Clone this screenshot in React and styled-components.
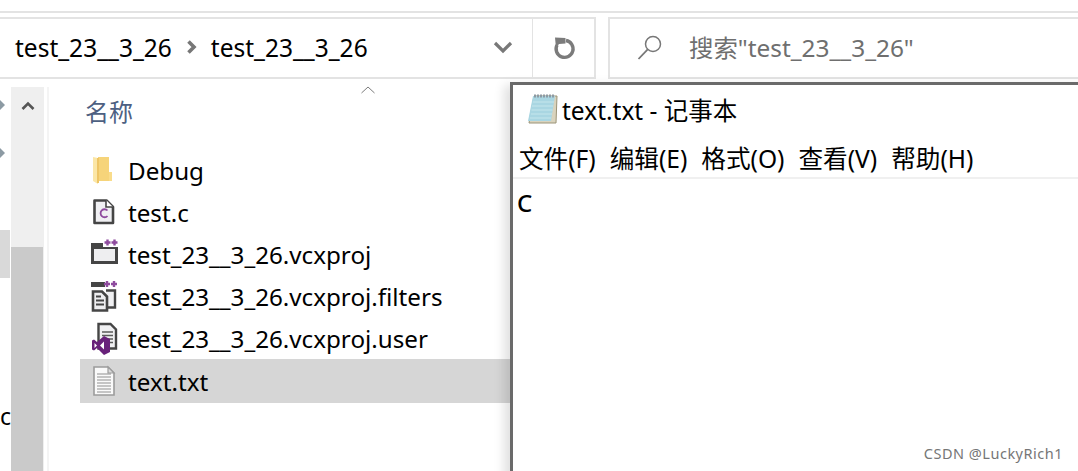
import React from 'react';
import styled, { createGlobalStyle } from 'styled-components';

const FONT = `"Noto Sans", "Noto Sans CJK SC", sans-serif`;

const Global = createGlobalStyle`
	html, body {
		margin: 0;
		padding: 0;
		background: #ffffff;
		overflow: hidden;
	}
	* {
		box-sizing: border-box;
	}
`;

const Page = styled.div`
	position: relative;
	width: 1078px;
	height: 471px;
	overflow: hidden;
	background: #ffffff;
	padding-top: 11px;
	font-family: ${FONT};
	color: #000;
`;

const TopRule = styled.div`
	height: 2px;
	background: #e3e3e3;
	margin-bottom: 4px;
`;

const Toolbar = styled.div`
	display: flex;
	height: 62px;
`;

const AddressBar = styled.div`
	display: flex;
	align-items: center;
	width: 533px;
	padding: 0 0 2px 15px;
	border-top: 2px solid #e3e3e3;
	border-bottom: 2px solid #e3e3e3;
	border-right: 1px solid #e3e3e3;
	font-size: 24.5px;
`;

const Crumb = styled.span`
	white-space: nowrap;
`;

const CrumbArrow = styled.svg`
	width: 12px;
	height: 14px;
	margin: 0 13px 0 14px;
`;

const Dropdown = styled.svg`
	width: 20px;
	height: 14px;
	margin-left: auto;
	margin-right: 19px;
`;

const RefreshBox = styled.div`
	display: flex;
	align-items: center;
	justify-content: center;
	width: 63px;
	border-top: 2px solid #e3e3e3;
	border-bottom: 2px solid #e3e3e3;
	border-right: 2px solid #e3e3e3;
`;

const SearchBox = styled.div`
	display: flex;
	align-items: center;
	flex: 1;
	margin-left: 12px;
	padding: 0 0 3px 27px;
	border: 2px solid #e3e3e3;
	border-right: 0;
	color: #6f6f6f;
	font-size: 24.4px;
`;

const SearchIcon = styled.svg`
	width: 26px;
	height: 26px;
	margin-right: 26px;
`;

const Main = styled.div`
	display: flex;
	height: 393px;
`;

const TreeEdge = styled.div`
	width: 11px;
	padding-top: 21px;
	overflow: hidden;
`;

const TreeArrow = styled.svg`
	display: block;
	width: 5px;
	height: 10px;
	margin-bottom: 38px;
`;

const TreeSelected = styled.div`
	width: 10px;
	height: 48px;
	margin-top: 72px;
	background: #d9d9d9;
`;

const TreeLetter = styled.div`
	margin-top: 122px;
	font-size: 23px;
	line-height: 32px;
`;

const Scrollbar = styled.div`
	display: flex;
	flex-direction: column;
	width: 33px;
	margin-top: 8px;
	background: #efefef;
`;

const ScrollUp = styled.div`
	display: flex;
	justify-content: center;
	height: 160px;
	padding-top: 14px;
`;

const ScrollThumb = styled.div`
	flex: 1;
	width: 32px;
	background: #cacaca;
`;

const PaneEdge = styled.div`
	width: 2px;
	margin: 8px 0 0 3px;
	background: #f4f4f4;
`;

const FileList = styled.div`
	position: relative;
	flex: 1;
	padding: 0 0 0 31px;
`;

const SortCaret = styled.svg`
	position: absolute;
	left: 311px;
	top: 6px;
	width: 16px;
	height: 10px;
`;

const ColumnHead = styled.div`
	height: 70px;
	padding: 14px 0 0 5px;
	font-size: 24px;
	line-height: 38px;
	color: #4d6082;
`;

const Row = styled.div`
	display: flex;
	align-items: center;
	width: 431px;
	height: ${(p) => (p.$selected ? '44px' : '42px')};
	padding-left: 10px;
	font-size: 24.2px;
	white-space: nowrap;
	background: ${(p) => (p.$selected ? '#d6d6d6' : 'transparent')};
`;

const RowIcon = styled.svg`
	flex: none;
	width: 28px;
	height: 30px;
	margin-right: 10px;
	overflow: visible;
`;

const Notepad = styled.div`
	position: absolute;
	left: 510px;
	top: 82px;
	width: 580px;
	height: 400px;
	padding: 0 0 0 6px;
	background: #ffffff;
	border: 3px solid #6a6a6a;
	box-shadow: -6px 3px 10px rgba(0, 0, 0, 0.12);
`;

const TitleBar = styled.div`
	display: flex;
	align-items: center;
	height: 51px;
	padding: 0 0 2px 7px;
	font-size: 24.5px;
`;

const NoteIcon = styled.svg`
	width: 33px;
	height: 34px;
	margin-right: 3px;
`;

const MenuBar = styled.div`
	display: flex;
	gap: 14px;
	height: 43px;
	margin-left: -6px;
	padding: 4px 0 0 6px;
	border-bottom: 2px solid #f0f0f0;
	font-size: 24.6px;
	line-height: 38px;
`;

const MenuItem = styled.span`
	white-space: nowrap;
`;

const Editor = styled.div`
	margin-left: -2px;
	font-size: 24px;
	font-weight: 500;
	line-height: 48px;
`;

const Watermark = styled.div`
	position: absolute;
	right: 15px;
	bottom: 8px;
	font-size: 14.5px;
	line-height: 20px;
	letter-spacing: 0.5px;
	color: #767676;
`;

const FolderIcon = () => (
	<RowIcon viewBox="0 0 28 30">
		<path d="M8 2h11v15h3v9H8z" fill="#f9dc8b" />
		<path d="M8 2h11v24H8z" fill="#f6d47a" />
		<path d="M3 2l5 1v26l-5-3z" fill="#fbe6a6" />
		<path d="M7 3h2v25H7z" fill="#eec565" />
	</RowIcon>
);

const CFileIcon = () => (
	<RowIcon viewBox="0 0 28 30">
		<path d="M4.500 3.500h12l6.500 6.500v16H4.500z" fill="#f0f0f3" stroke="#454545" strokeWidth="2.600" strokeLinejoin="round" />
		<path d="M16 3v7h7" fill="#ffffff" stroke="#454545" strokeWidth="1.600" />
		<path d="M17.500 13.500a4 4 0 1 0 0 5.500" fill="none" stroke="#8e4b9e" strokeWidth="1.800" />
	</RowIcon>
);

const ProjectIcon = () => (
	<RowIcon viewBox="0 0 28 30">
		<rect x="2.500" y="8.500" width="24" height="15" fill="#eeeef0" stroke="#454545" strokeWidth="3" />
		<rect x="1" y="4" width="15" height="6" fill="#454545" />
		<rect x="13" y="-1" width="15" height="9" fill="#ffffff" />
		<path d="M14.500 3.500h6M17.500 0.500v6M21.500 3.500h6M24.500 0.500v6" stroke="#8e4b9e" strokeWidth="2.400" />
	</RowIcon>
);

const FiltersIcon = () => (
	<RowIcon viewBox="0 0 28 30">
		<rect x="1" y="1" width="14" height="5" fill="#454545" />
		<path d="M16 9.500h9v17h-9" fill="#f0f0f2" stroke="#454545" strokeWidth="2.400" />
		<path d="M3 10.500h9l5 5v14H3z" fill="#eeeef0" stroke="#454545" strokeWidth="2.600" />
		<path d="M6 15.500h5M6 19.500h8M6 23.500h8" stroke="#454545" strokeWidth="2" />
		<path d="M14 3h6M17 0v6M21 3h6M24 0v6" stroke="#8e4b9e" strokeWidth="2.400" />
	</RowIcon>
);

const UserFileIcon = () => (
	<RowIcon viewBox="0 0 28 30">
		<path d="M8.500 1h12l5.500 5.500v19H8.500z" fill="#f0f0f2" stroke="#454545" strokeWidth="2.400" />
		<path d="M12 9h11M12 12.500h11M12 16h11M18 19.500h5" stroke="#5a5a5a" strokeWidth="1.400" />
		<path d="M14 13l6 3v13l-6 3-7-7-3 2.500-2-1v-9l2-1 3 2.500z" fill="#68217a" />
		<path d="M4.500 20v5l2.500-2.500zM14 18.500l-4 4 4 4z" fill="#ffffff" />
	</RowIcon>
);

const TextFileIcon = () => (
	<RowIcon viewBox="0 0 28 30">
		<path d="M4 1h14l6 6v22H4z" fill="#fafafa" stroke="#9c9c9c" strokeWidth="1.600" />
		<path d="M18 1v6h6z" fill="#dcdcdc" stroke="#9c9c9c" strokeWidth="1.200" />
		<path d="M7 8h14M7 11h14M7 14h14M7 17h14M7 20h14M7 23h14M7 26h14" stroke="#8f8f8f" strokeWidth="1.200" />
	</RowIcon>
);

const files = [
	{ name: 'Debug', icon: FolderIcon },
	{ name: 'test.c', icon: CFileIcon },
	{ name: 'test_23__3_26.vcxproj', icon: ProjectIcon },
	{ name: 'test_23__3_26.vcxproj.filters', icon: FiltersIcon },
	{ name: 'test_23__3_26.vcxproj.user', icon: UserFileIcon },
	{ name: 'text.txt', icon: TextFileIcon, selected: true },
];

const menus = ['文件(F)', '编辑(E)', '格式(O)', '查看(V)', '帮助(H)'];

export default function App() {
	return (
		<Page>
			<Global />
			<TopRule />
			<Toolbar>
				<AddressBar>
					<Crumb>test_23__3_26</Crumb>
					<CrumbArrow viewBox="0 0 12 14">
						<path d="M2.500 1.500L8 7l-5.500 5.500" fill="none" stroke="#777" strokeWidth="3.600" />
					</CrumbArrow>
					<Crumb>test_23__3_26</Crumb>
					<Dropdown viewBox="0 0 20 14">
						<path d="M2 3l8 8 8-8" fill="none" stroke="#787878" strokeWidth="3.200" />
					</Dropdown>
				</AddressBar>
				<RefreshBox>
					<svg width="26" height="28" viewBox="0 0 26 28">
						<path d="M15 6.500a8.500 8.500 0 1 1-9 4.500" fill="none" stroke="#7b7b7b" strokeWidth="3.400" />
						<path d="M4 3.500L14.500 4v5.500L8 10l-3 4z" fill="#7b7b7b" />
					</svg>
				</RefreshBox>
				<SearchBox>
					<SearchIcon viewBox="0 0 26 26">
						<circle cx="16" cy="10" r="7.500" fill="none" stroke="#777" strokeWidth="1.500" />
						<path d="M10.700 15.300L1.500 25" fill="none" stroke="#777" strokeWidth="1.800" />
					</SearchIcon>
					搜索"test_23__3_26"
				</SearchBox>
			</Toolbar>
			<Main>
				<TreeEdge>
					<TreeArrow viewBox="0 0 5 10">
						<path d="M0 0l5 5-5 5z" fill="#8c9aa3" />
					</TreeArrow>
					<TreeArrow viewBox="0 0 5 10">
						<path d="M0 0l5 5-5 5z" fill="#8c9aa3" />
					</TreeArrow>
					<TreeSelected />
					<TreeLetter>c</TreeLetter>
				</TreeEdge>
				<Scrollbar>
					<ScrollUp>
						<svg width="14" height="10" viewBox="0 0 14 10">
							<path d="M1.500 8L7 2.500 12.500 8" fill="none" stroke="#555" strokeWidth="2.600" />
						</svg>
					</ScrollUp>
					<ScrollThumb />
				</Scrollbar>
				<PaneEdge />
				<FileList>
					<SortCaret viewBox="0 0 16 10">
						<path d="M1.500 8L8 2l6.500 6" fill="none" stroke="#7c7c7c" strokeWidth="1" />
					</SortCaret>
					<ColumnHead>名称</ColumnHead>
					{files.map((file) => (
						<Row key={file.name} $selected={file.selected}>
							<file.icon />
							{file.name}
						</Row>
					))}
				</FileList>
			</Main>
			<Notepad>
				<TitleBar>
					<NoteIcon viewBox="0 0 33 34">
						<path d="M8 3h23l-1 27H3z" fill="#d9d3bd" stroke="#9b9478" strokeWidth="1" />
						<path d="M7 3h22l-4 25H2z" fill="#a9d6e2" />
						<path d="M7 9h21M6 13h21M5.500 17h21M5 21h21M4 25h21" stroke="#c6e5ec" strokeWidth="1.200" />
						<path d="M8 3h20" stroke="#8d9aa3" strokeWidth="3" strokeDasharray="2 1" />
					</NoteIcon>
					text.txt - 记事本
				</TitleBar>
				<MenuBar>
					{menus.map((menu) => (
						<MenuItem key={menu}>{menu}</MenuItem>
					))}
				</MenuBar>
				<Editor>C</Editor>
			</Notepad>
			<Watermark>CSDN @LuckyRich1</Watermark>
		</Page>
	);
}
